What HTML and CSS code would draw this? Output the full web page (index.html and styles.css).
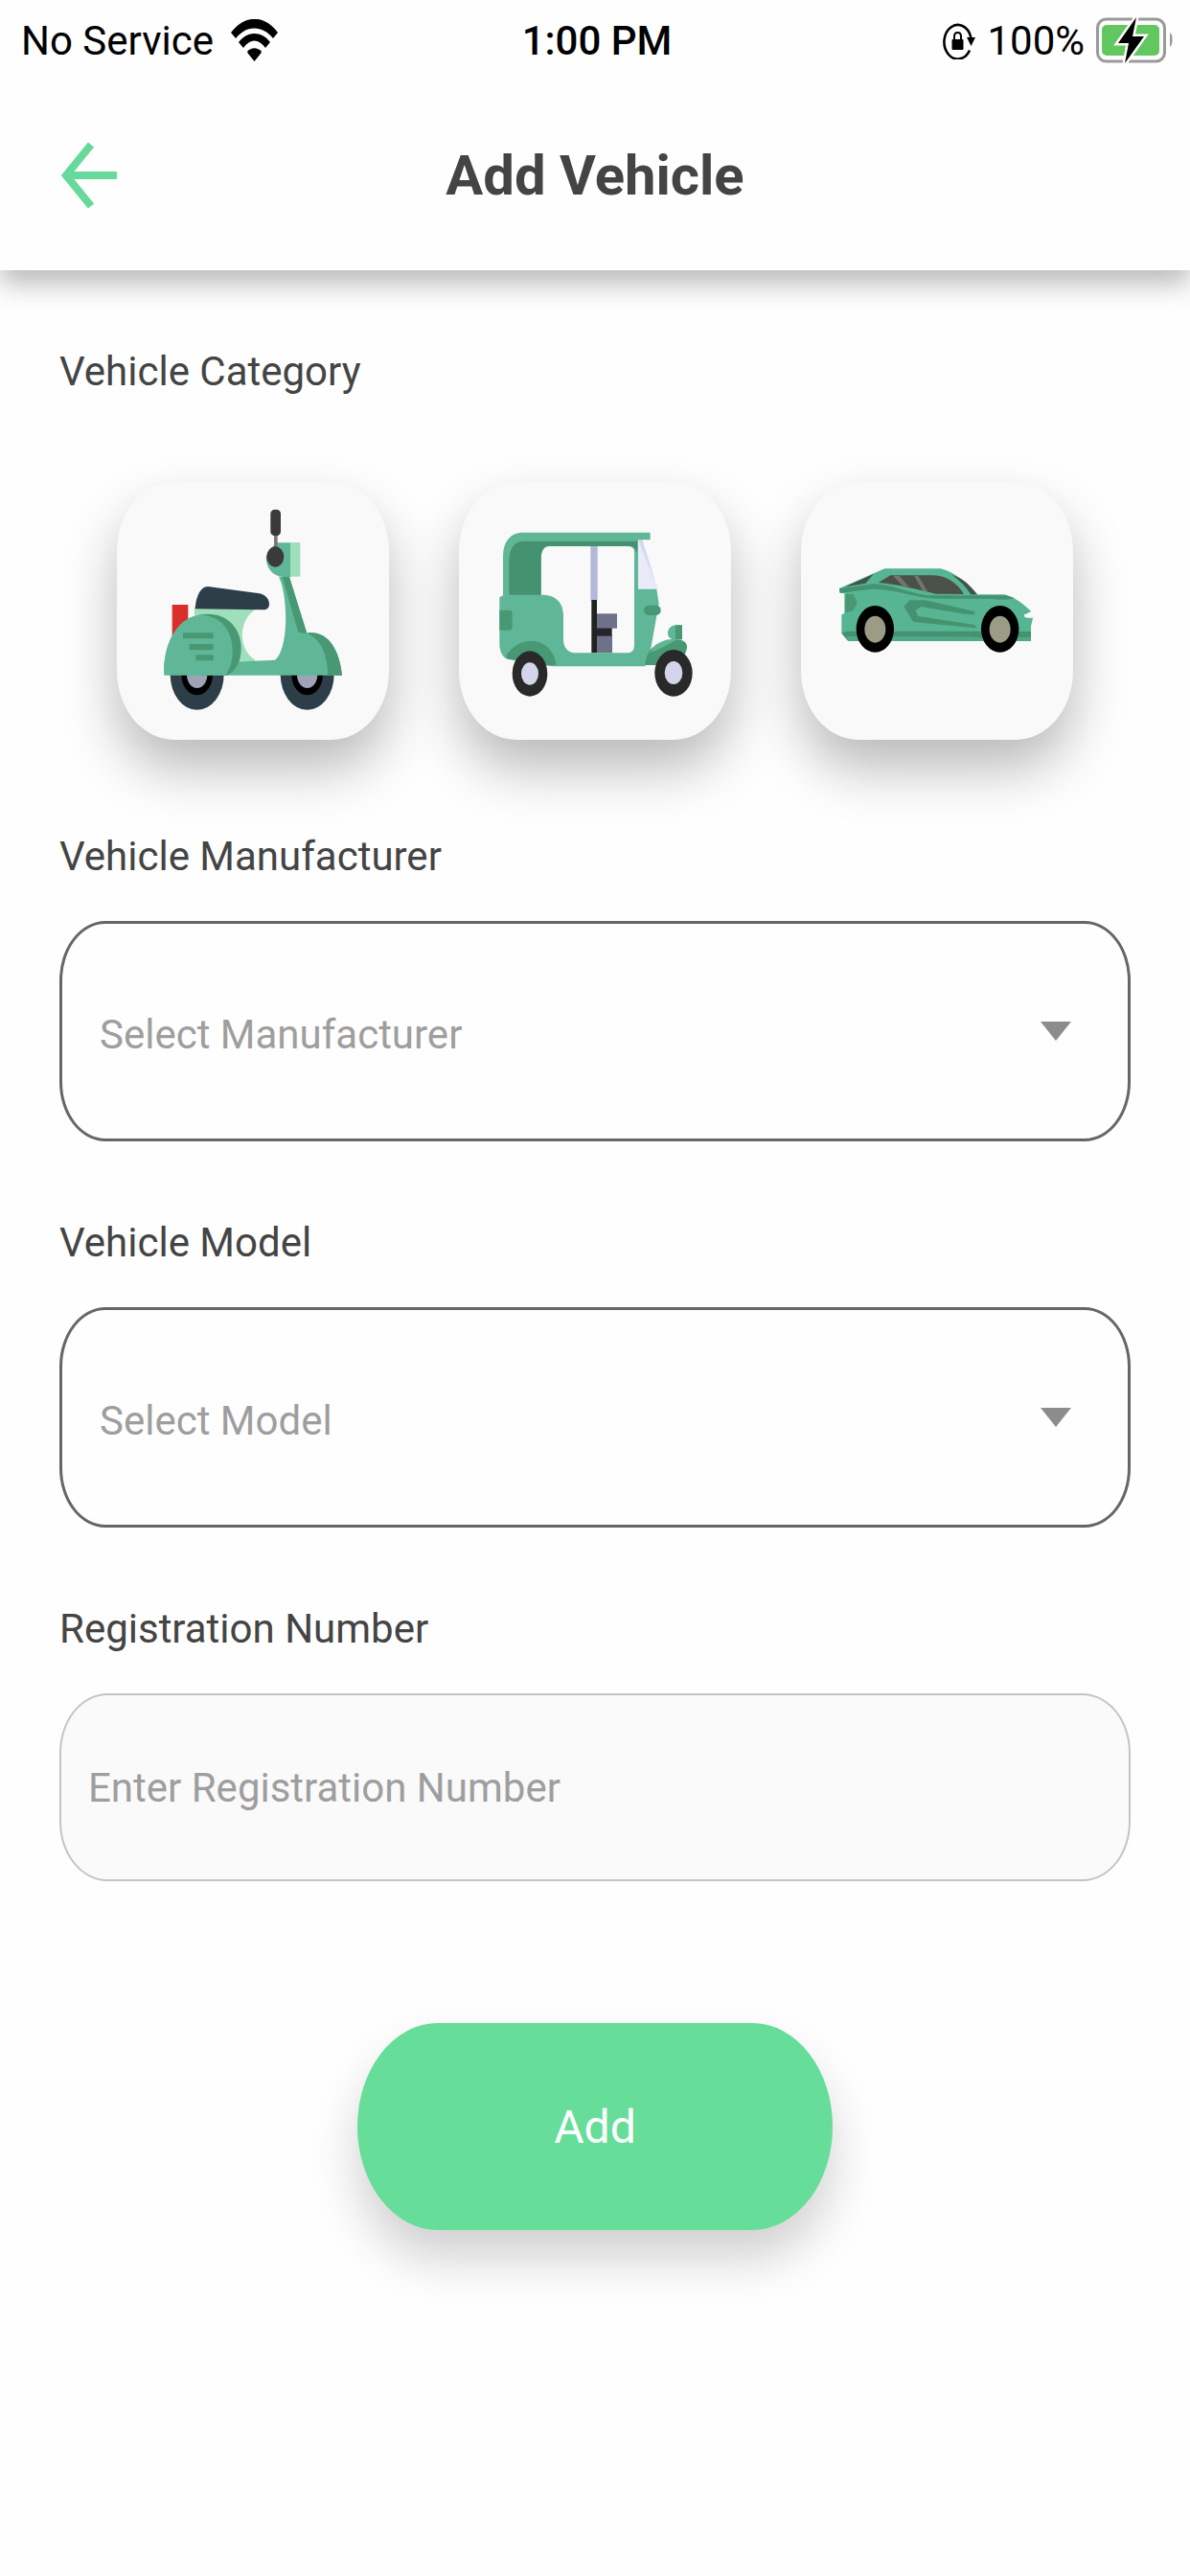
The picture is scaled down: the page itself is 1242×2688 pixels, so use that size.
FILE: index.html
```html
<!DOCTYPE html>
<html lang="en">
<head>
<meta charset="UTF-8">
<meta name="viewport" content="width=device-width, initial-scale=1">
<title>Add Vehicle</title>
<link rel="stylesheet" href="styles.css">
</head>
<body>

<header class="header">
  <!-- Status bar -->
  <div class="status">
    <div class="status-left">
      <span>No Service</span>
      <svg class="wifi" viewBox="0 0 49 44" aria-hidden="true">
        <path d="M0 14C14 -5 35 -5 49 14L44 20C33 6 16 6 5 20Z"/>
        <path d="M8 24C17 12 32 12 41 24L36 30C29 20 20 20 13 30Z"/>
        <path d="M17 34C21 29 28 29 32 34L31 36L24.500 44L18 36Z"/>
      </svg>
    </div>
    <span class="time">1:00 PM</span>
    <div class="status-right">
      <svg class="lock" viewBox="0 0 34 39" aria-hidden="true">
        <path d="M28 29.500A14.200 17.800 0 1 1 29.300 16" fill="none" stroke="#000" stroke-width="2.600"/>
        <path d="M25 16H34L29.500 25Z"/>
        <rect x="9.500" y="18" width="12" height="11" rx="1"/>
        <path d="M12 19V15C12 9.500 19 9.500 19 15V19" fill="none" stroke="#000" stroke-width="2"/>
      </svg>
      <span>100%</span>
      <svg class="battery" viewBox="0 0 80 48" aria-hidden="true">
        <rect x="1.500" y="2" width="70" height="44" rx="9" fill="none" stroke="#999" stroke-width="3"/>
        <rect x="6" y="8" width="60" height="32" rx="5" fill="#62c75f"/>
        <path d="M77 16C80.500 18 80.500 29 77 31Z" fill="#999"/>
        <path d="M42 0L23 27H34L30 48L50 20H38Z" stroke="#fefefe" stroke-width="5"/>
        <path d="M42 0L23 27H34L30 48L50 20H38Z"/>
      </svg>
    </div>
  </div>

  <!-- Navigation bar -->
  <div class="nav">
    <button type="button" class="back" aria-label="Back">
      <svg viewBox="0 0 58 70" fill="none" stroke="#66d99b" stroke-width="8">
        <path d="M31 3L5 35L31 67M6 35H58"/>
      </svg>
    </button>
    <h1>Add Vehicle</h1>
  </div>
</header>

<main>
  <form class="form">
    <h2 class="label">Vehicle Category</h2>
    <div class="categories">
      <button type="button" class="category" aria-label="Scooter">
        <svg viewBox="65 69 852 807">
          <rect x="238" y="453" width="50" height="100" fill="#d92f2b"/>
          <path d="M308 462H510C445 490 440 590 497 625V640H308Z" fill="#9fdfbb"/>
          <path d="M310 466C312 430 326 396 350 396L512 418C534 424 542 438 542 452C541 463 534 469 524 469Z" fill="#2d3e48"/>
          <g>
            <ellipse cx="316" cy="672" rx="84" ry="110" fill="#2d3e48"/>
            <ellipse cx="316" cy="672" rx="49" ry="64" fill="#000"/>
            <ellipse cx="316" cy="672" rx="32" ry="42" fill="#9fa3b8"/>
            <ellipse cx="661" cy="672" rx="84" ry="110" fill="#2d3e48"/>
            <ellipse cx="661" cy="672" rx="49" ry="64" fill="#000"/>
            <ellipse cx="661" cy="672" rx="32" ry="42" fill="#9fa3b8"/>
          </g>
          <path d="M572 365L605 366L660 542C724 532 762 592 770 674H213L213 632H440L560 626C605 590 600 420 572 365Z" fill="#60b797"/>
          <path d="M583 366H605L660 543L633 540Z" fill="#479873"/>
          <path d="M660 542C724 532 762 592 770 674H726C724 610 706 562 660 542Z" fill="#479873"/>
          <path d="M318 486C400 468 454 520 454 590C454 632 436 664 408 674H330Z" fill="#479873"/>
          <path d="M213 672C206 570 262 485 330 485C390 487 427 535 427 598C427 632 418 656 404 674Z" fill="#60b797"/>
          <path d="M272 541H367V559H272ZM292 576H367V595H292ZM312 610H367V628H312Z" fill="#479873"/>
          <path d="M562 259H610V366H584C550 362 531 335 532 302Z" fill="#60b797"/>
          <rect x="608" y="258" width="31" height="107" fill="#9fdfbb"/>
          <rect x="557" y="230" width="11" height="50" fill="#777"/>
          <rect x="546" y="155" width="32" height="82" rx="13" fill="#3a3a3a"/>
          <ellipse cx="561" cy="303" rx="27" ry="32" fill="#3a3a3a"/>
        </svg>
      </button>

      <button type="button" class="category" aria-label="Auto rickshaw">
        <svg viewBox="57 69 852 807">
          <rect x="469" y="268" width="22" height="172" fill="#b2b8d8"/>
          <rect x="472" y="438" width="17" height="166" fill="#222"/>
          <rect x="489" y="481" width="63" height="46" fill="#6e7188"/>
          <rect x="489" y="548" width="48" height="56" fill="#6e7188"/>
          <rect x="486" y="526" width="50" height="25" fill="#24242c"/>
          <path d="M618 250H631L680 404H618Z" fill="#e7e9f8"/>
          <path d="M618 250H631L672 380Z" fill="#d5d8ee"/>
          <path d="M618 250L662 404H618Z" fill="#e9ebfa"/>
          <!-- Canopy and body -->
          <path fill-rule="evenodd" d="M250 227H656V250H618V404H676L683 450L656 600L640 646H350L210 624C194 618 184 600 184 575V430L195 424V300C196 255 218 230 250 227ZM338 270Q314 270 314 310V422C360 420 384 448 384 485V560C384 590 400 604 425 604H585Q606 604 606 580V290Q606 270 590 270Z" fill="#60b797"/>
          <path d="M214 422V310C218 270 232 254 262 254H615V290L606 275Q600 270 590 270H338Q314 272 314 310V422Z" fill="#459270"/>
          <path d="M184 470H214Q224 470 224 480V523Q224 533 214 533H184Z" fill="#479873"/>
          <path d="M204 615C220 584 252 567 282 567C326 567 356 598 362 643H320L210 622Z" fill="#479873"/>
          <path d="M640 642C642 600 668 566 735 562C764 562 772 575 771 588L766 606L690 642Z" fill="#479873"/>
          <path d="M656 604C672 570 706 558 740 562L700 584Z" fill="#60b797"/>
          <rect x="636" y="455" width="53" height="31" rx="15" fill="#479873"/>
          <path d="M755 517V562H728C712 558 710 548 711 538C714 524 724 517 738 517Z" fill="#60b797"/>
          <path d="M735 517H756V562H735Z" fill="#479873"/>
          <ellipse cx="279" cy="669" rx="55" ry="71" fill="#292929"/>
          <ellipse cx="279" cy="669" rx="27" ry="35" fill="#d3d6eb"/>
          <ellipse cx="729" cy="667" rx="59" ry="73" fill="#292929"/>
          <ellipse cx="729" cy="666" rx="28" ry="36" fill="#d3d6eb"/>
        </svg>
      </button>

      <button type="button" class="category" aria-label="Car">
        <svg viewBox="48 69 852 807">
          <path d="M168 402L310 340H485C535 352 570 390 600 421H685C716 428 746 452 769 474L748 484V492H775L768 520V567H196L175 542V484L184 480V418L170 416Z" fill="#57b593"/>
          <path d="M186 397L275 357L250 386Z" fill="#3f544a"/>
          <path d="M520 360C556 368 580 396 600 421H580C566 398 544 376 520 360Z" fill="#3f544a"/>
          <path d="M168 402L278 388C360 394 400 425 460 424H690L716 432C690 442 665 433 610 434H475C395 430 340 402 270 404L170 416Z" fill="#459270"/>
          <path d="M290 384L328 361H460C510 362 540 390 558 420L470 419C400 402 352 390 290 384Z" fill="#4b5148"/>
          <path d="M336 362H356L386 398L366 394ZM402 362H414L446 414L430 410Z" fill="#72776b"/>
          <path d="M188 420H212L224 446L212 472L186 478Z" fill="#479873"/>
          <path d="M388 439H436L592 474V484L560 482L424 459L406 472L416 489L590 516L598 526L400 507L370 460Z" fill="#459270"/>
          <path d="M190 536H768V567H196L175 542Z" fill="#459270"/>
          <path d="M190 552L196 567H768V553Z" fill="#50a886"/>
          <path d="M768 515V536H735V520Z" fill="#57b593"/>
          <path d="M745 484L774 483V494H754Z" fill="#f9f9f9"/>
          <ellipse cx="280" cy="529" rx="59" ry="73" fill="#000"/>
          <ellipse cx="280" cy="530" rx="33" ry="42" fill="#9a9c86"/>
          <ellipse cx="671" cy="529" rx="59" ry="73" fill="#000"/>
          <ellipse cx="671" cy="530" rx="33" ry="42" fill="#9a9c86"/>
        </svg>
      </button>
    </div>

    <div class="field">
      <label class="label" for="manufacturer">Vehicle Manufacturer</label>
      <div class="select">
        <select id="manufacturer">
          <option value="">Select Manufacturer</option>
        </select>
      </div>
    </div>

    <div class="field">
      <label class="label" for="model">Vehicle Model</label>
      <div class="select">
        <select id="model">
          <option value="">Select Model</option>
        </select>
      </div>
    </div>

    <div class="field">
      <label class="label" for="registration">Registration Number</label>
      <input type="text" id="registration" placeholder="Enter Registration Number">
    </div>

    <button type="submit" class="add">Add</button>
  </form>
</main>

</body>
</html>
```
FILE: styles.css
```css
* {
  box-sizing: border-box;
}
body {
  margin: 0;
  background: #fefefe;
  color: #444;
  font-family: Roboto, "Noto Sans", sans-serif;
  font-size: 42px;
}
button, input, select {
  font: inherit;
  margin: 0;
}
button {
  border: 0;
  padding: 0;
  cursor: pointer;
}
svg {
  display: block;
}

/* Header */
.header {
  background: #fefefe;
  box-shadow: 0 14px 26px rgba(0, 0, 0, 0.27);
}
.status {
  display: grid;
  grid-template-columns: 1fr auto 1fr;
  align-items: center;
  height: 84px;
  padding: 0 18px 0 22px;
  color: #000;
}
.status-left,
.status-right {
  display: flex;
  align-items: center;
  gap: 18px;
}
.status-right {
  justify-content: flex-end;
  gap: 12px;
}
.time {
  font-weight: 500;
}
.wifi {
  width: 49px;
  height: 44px;
}
.lock {
  width: 34px;
  height: 39px;
}
.battery {
  width: 80px;
  height: 48px;
}
.nav {
  display: grid;
  grid-template-columns: 1fr auto 1fr;
  align-items: center;
  height: 198px;
  padding: 0 64px;
}
.back {
  width: 58px;
  background: none;
}
.nav h1 {
  margin: 0;
  font-size: 58px;
  font-weight: 700;
}

/* Form */
.form {
  display: flex;
  flex-direction: column;
  padding: 82px 62px;
}
.label {
  display: block;
  margin: 0;
  font-size: 42px;
  font-weight: 400;
  line-height: 48px;
}
.categories {
  display: flex;
  justify-content: center;
  gap: 73px;
  margin: 91px 0 98px;
}
.category {
  width: 284px;
  border-radius: 60px / 72px;
  background: #f9f9f9;
  box-shadow: 0 30px 56px rgba(0, 0, 0, 0.27);
}
.field {
  display: flex;
  flex-direction: column;
  gap: 43px;
  margin-bottom: 82px;
}
.select {
  display: grid;
  align-items: center;
}
.select select,
.select::after {
  grid-area: 1 / 1;
}
.select select {
  appearance: none;
  width: 100%;
  height: 230px;
  padding: 6px 100px 0 39px;
  border: 3px solid #666;
  border-radius: 48px / 62px;
  background: #fefefe;
  color: #9e9e9e;
}
.select::after {
  content: "";
  justify-self: end;
  width: 32px;
  height: 20px;
  margin-right: 62px;
  background: #8c8c8c;
  clip-path: polygon(0 0, 100% 0, 50% 100%);
  pointer-events: none;
}
.field input {
  width: 100%;
  height: 196px;
  padding: 0 28px;
  border: 2px solid #c4c4c4;
  border-radius: 50px / 62px;
  background: #fafafa;
  color: #444;
}
.field input::placeholder {
  color: #9e9e9e;
}
.add {
  align-self: center;
  width: 496px;
  height: 216px;
  margin-top: 66px;
  border-radius: 84px / 108px;
  background: #66dd99;
  box-shadow: 0 30px 50px rgba(0, 0, 0, 0.18);
  color: #fff;
  font-size: 48px;
}
```
